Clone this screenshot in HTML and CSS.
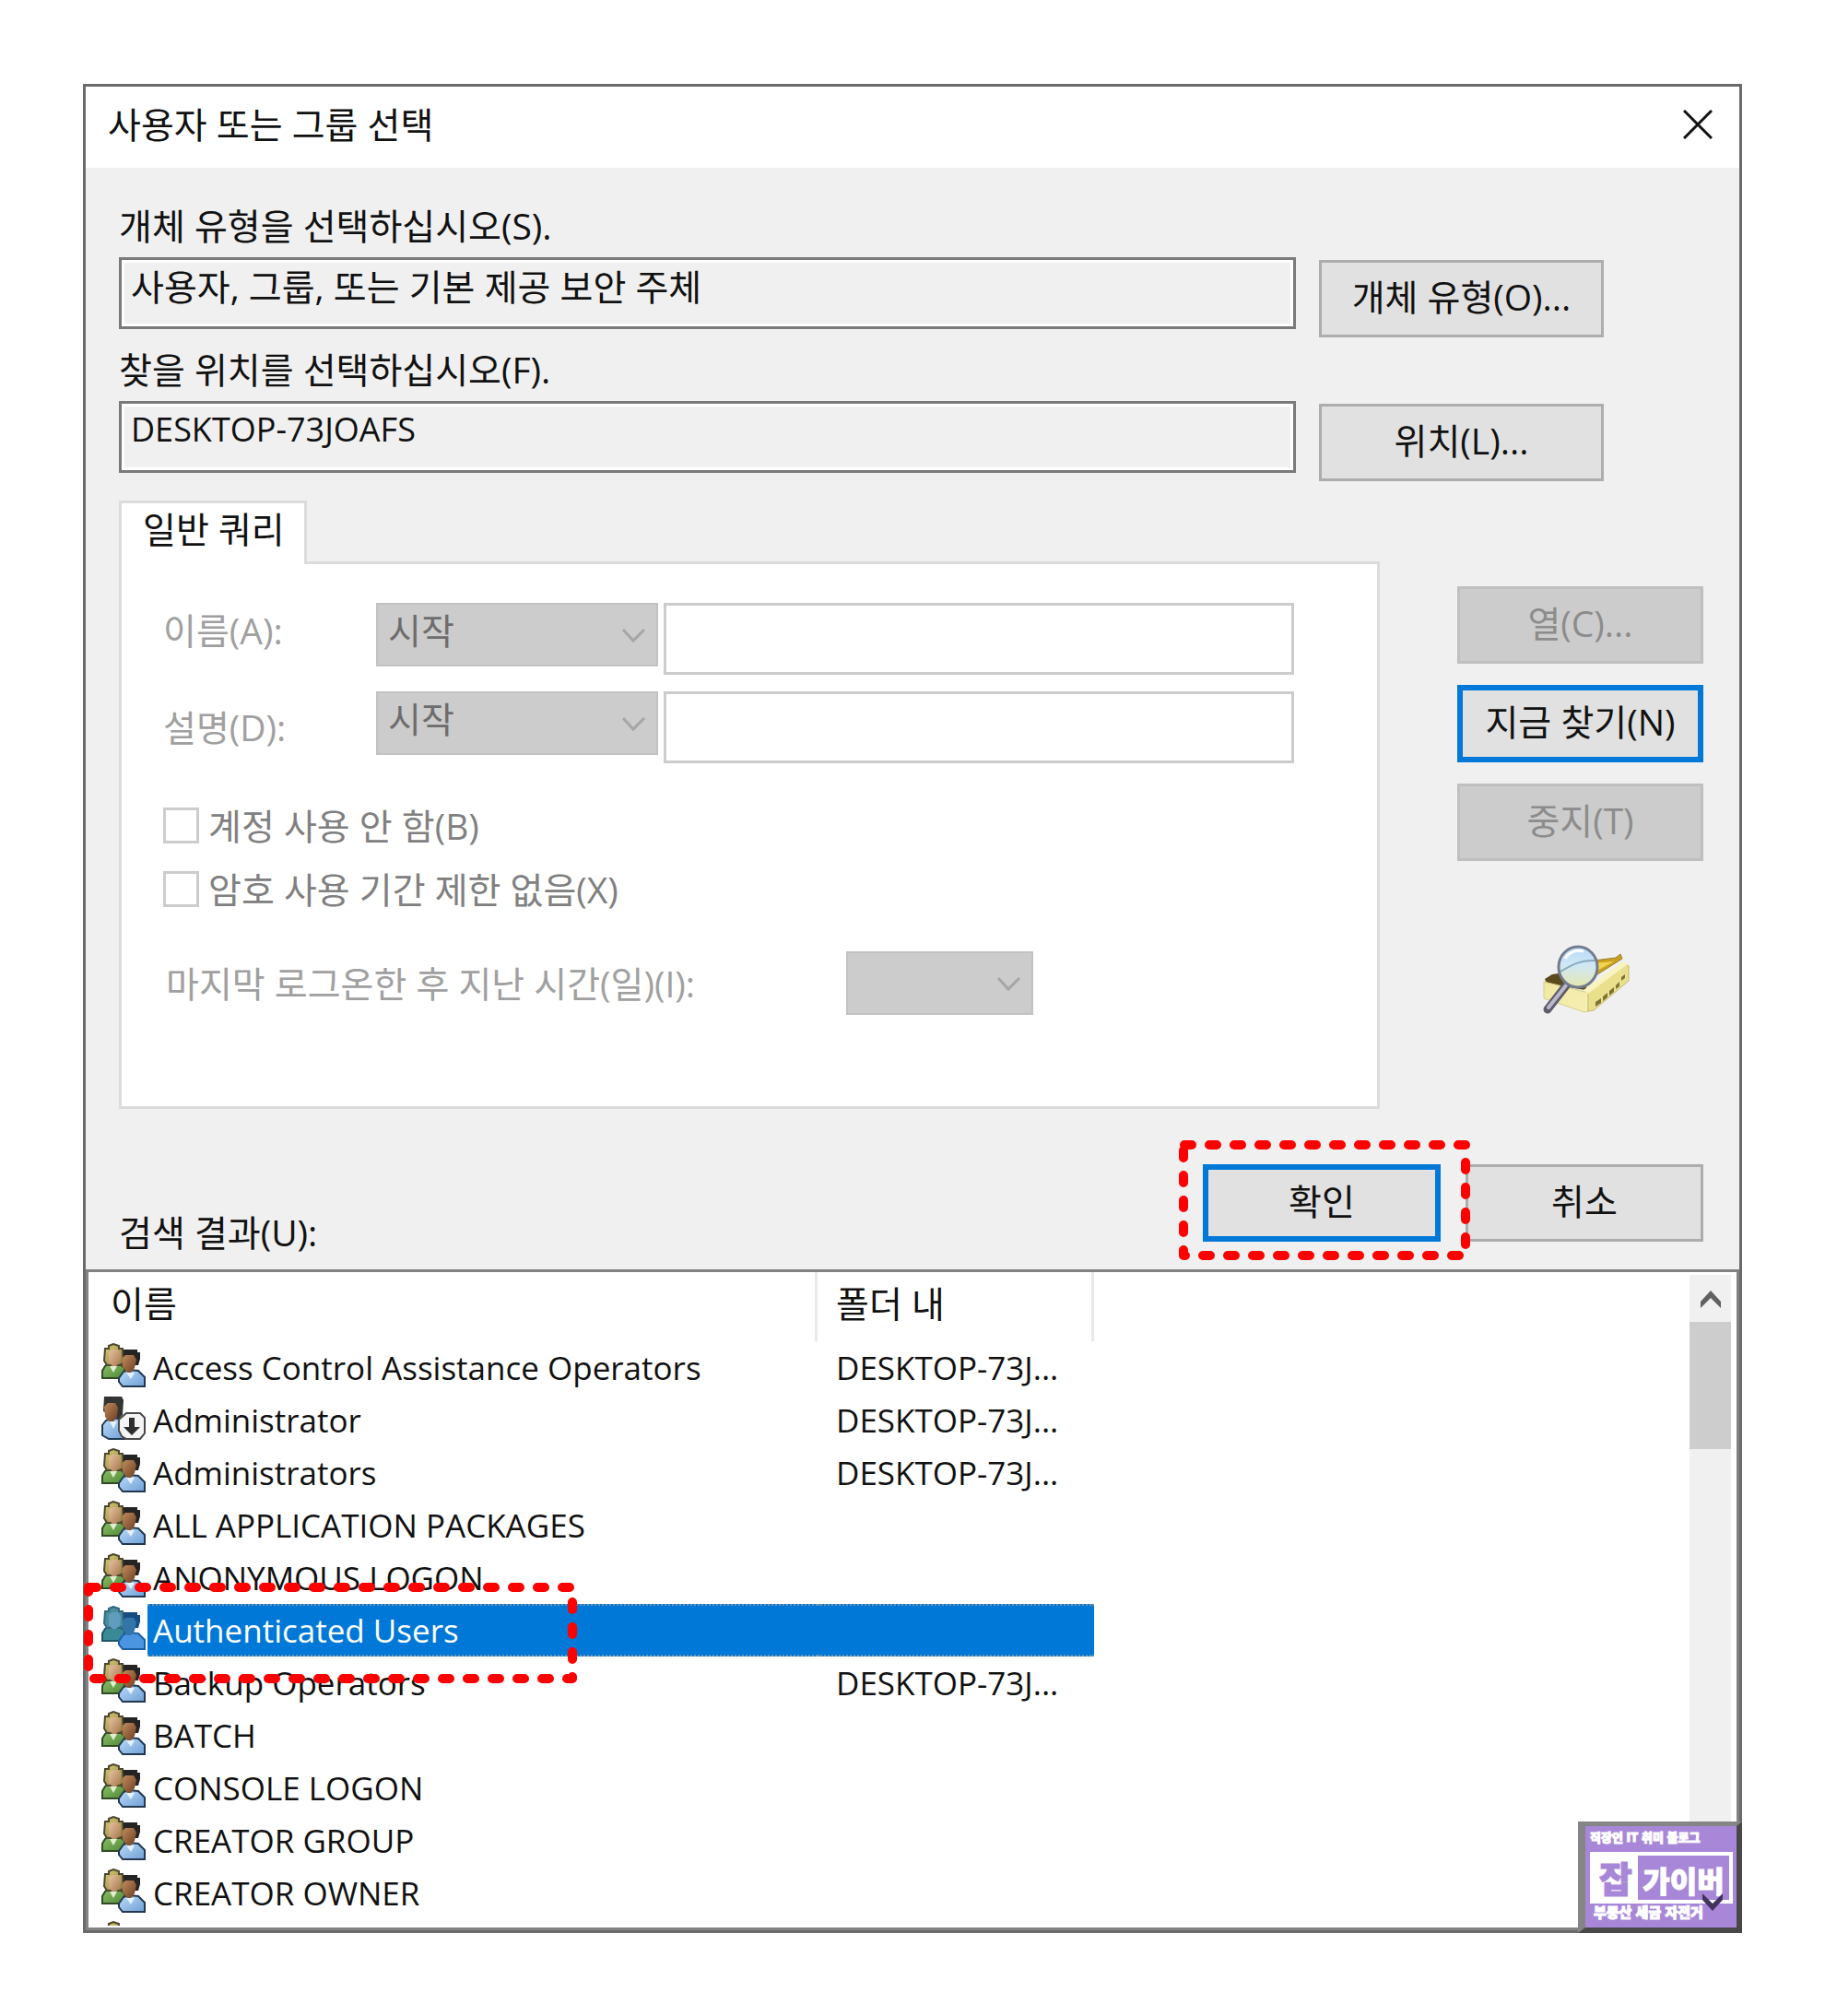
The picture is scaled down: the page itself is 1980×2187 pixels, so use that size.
FILE: index.html
```html
<!DOCTYPE html>
<html lang="ko">
<head>
<meta charset="utf-8">
<title>사용자 또는 그룹 선택</title>
<link rel="stylesheet" href="styles.css">
</head>
<body>
<svg class="defs" aria-hidden="true">
  <defs>
    <linearGradient id="hair" x1="0" y1="0" x2="1" y2="1"><stop offset="0" stop-color="#d8cf7c"/><stop offset="1" stop-color="#8d7b3a"/></linearGradient>
    <linearGradient id="skin" x1="0" y1="0" x2="1" y2="1"><stop offset="0" stop-color="#e6c3a0"/><stop offset="1" stop-color="#a87750"/></linearGradient>
    <linearGradient id="tan" x1="0" y1="0" x2="1" y2="1"><stop offset="0" stop-color="#c08a5e"/><stop offset="1" stop-color="#6b3d20"/></linearGradient>
    <linearGradient id="green" x1="0" y1="0" x2="1" y2="1"><stop offset="0" stop-color="#8fbf6a"/><stop offset="1" stop-color="#4f8a35"/></linearGradient>
    <linearGradient id="blue" x1="0" y1="0" x2="1" y2="1"><stop offset="0" stop-color="#bcdcf8"/><stop offset="1" stop-color="#6f9fd6"/></linearGradient>
    <symbol id="group" viewBox="0 0 48 48">
      <path d="M1 38V30l3-5 5-3h10l6 5v11z" fill="url(#green)" stroke="#2f4a25" stroke-width="2"/>
      <path d="M9 25l4 7 4-7z" fill="#dff0cf"/>
      <path d="M4 6h4V3l5-2 6 2v3h4l1 16-4 2H6l-3-5z" fill="url(#hair)" stroke="#4d4630" stroke-width="2"/>
      <path d="M8 10l4-3h6l3 5-1 9-4 4h-4l-4-4z" fill="url(#skin)"/>
      <path d="M24 7h15v3h3v7l-2 7H24z" fill="#252422"/>
      <path d="M19 38l5-7 6-2 10 1 4 4 3 3v10H23l-4-5z" fill="url(#blue)" stroke="#23384f" stroke-width="2"/>
      <path d="M27 32l5 7 4-7z" fill="#e4f2ff"/>
      <path d="M23 16l3-3h9l3 5-2 9-4 5h-4l-5-6z" fill="url(#tan)"/>
    </symbol>
    <symbol id="group-selected" viewBox="0 0 48 48">
      <path d="M1 38V30l3-5 5-3h10l6 5v11z" fill="#3a8a96" stroke="#1f5566" stroke-width="2"/>
      <path d="M4 6h4V3l5-2 6 2v3h4l1 16-4 2H6l-3-5z" fill="#4b8d9c" stroke="#316982" stroke-width="2"/>
      <path d="M8 10l4-3h6l3 5-1 9-4 4h-4l-4-4z" fill="#5f9cbd"/>
      <path d="M24 7h15v3h3v7l-2 7H24z" fill="#164d80"/>
      <path d="M19 38l5-7 6-2 10 1 4 4 3 3v10H23l-4-5z" fill="#4a94e0" stroke="#1a5fa5" stroke-width="2"/>
      <path d="M23 16l3-3h9l3 5-2 9-4 5h-4l-5-6z" fill="#3475a8"/>
    </symbol>
    <symbol id="user-disabled" viewBox="0 0 48 48">
      <path d="M1 43V32l4-5 6-3 8 1 6 6v16H8z" fill="url(#blue)" stroke="#23384f" stroke-width="2"/>
      <path d="M9 28l4 8 4-8z" fill="#e4f2ff"/>
      <path d="M3 1h19l2 4-1 16-4 4L2 17z" fill="#343432"/>
      <path d="M3 12l4-4h8l3 5-1 10-4 5H8l-4-5z" fill="url(#tan)"/>
      <path d="M27 19h15l5 5v17l-5 6H27l-5-3-3-6V26z" fill="#f4f4f4" stroke="#4a4a4a" stroke-width="2"/>
      <path d="M30 24h6v10h6l-9 9-9-9h6z" fill="#2f2f2f"/>
    </symbol>
  </defs>
</svg>

<main class="dialog">
  <header class="titlebar">
    <h1 class="title">사용자 또는 그룹 선택</h1>
    <button class="close" type="button" aria-label="닫기">
      <svg width="32" height="32" viewBox="0 0 32 32"><path d="M1 1l30 30M31 1L1 31" stroke="#111" stroke-width="3" fill="none"/></svg>
    </button>
  </header>

  <form class="content">
    <section class="scope">
      <label class="scope-label" for="types">개체 유형을 선택하십시오(S).</label>
      <input class="readout" id="types" type="text" value="사용자, 그룹, 또는 기본 제공 보안 주체" readonly>
      <button class="btn scope-btn" type="button">개체 유형(O)...</button>
      <label class="scope-label" for="place">찾을 위치를 선택하십시오(F).</label>
      <input class="readout latin" id="place" type="text" value="DESKTOP-73JOAFS" readonly>
      <button class="btn scope-btn" type="button">위치(L)...</button>
    </section>

    <section class="query">
      <div class="tabs">
        <div class="tab">일반 쿼리</div>
        <div class="panel">
          <div class="row">
            <label class="row-label" for="name">이름(A):</label>
            <span class="combo">
              <select aria-label="이름 조건" disabled><option>시작</option></select>
              <svg class="chevron" width="27" height="17" viewBox="0 0 27 17"><path d="M2 2l11 12L25 2" stroke="#a6a6a6" stroke-width="3" fill="none"/></svg>
            </span>
            <input class="textbox" id="name" type="text" disabled>
          </div>
          <div class="row row-center">
            <label class="row-label" for="desc">설명(D):</label>
            <span class="combo">
              <select aria-label="설명 조건" disabled><option>시작</option></select>
              <svg class="chevron" width="27" height="17" viewBox="0 0 27 17"><path d="M2 2l11 12L25 2" stroke="#a6a6a6" stroke-width="3" fill="none"/></svg>
            </span>
            <input class="textbox" id="desc" type="text" disabled>
          </div>
          <div class="checks">
            <label class="check"><input type="checkbox" disabled>계정 사용 안 함(B)</label>
            <label class="check"><input type="checkbox" disabled>암호 사용 기간 제한 없음(X)</label>
          </div>
          <div class="row row-center">
            <label class="row-label days-label" for="days">마지막 로그온한 후 지난 시간(일)(I):</label>
            <span class="combo combo-short">
              <select id="days" disabled><option></option></select>
              <svg class="chevron" width="27" height="17" viewBox="0 0 27 17"><path d="M2 2l11 12L25 2" stroke="#a6a6a6" stroke-width="3" fill="none"/></svg>
            </span>
          </div>
        </div>
      </div>
      <div class="actions">
        <button class="btn" type="button" disabled>열(C)...</button>
        <button class="btn btn-default" type="button">지금 찾기(N)</button>
        <button class="btn" type="button" disabled>중지(T)</button>
        <svg class="search-art" width="108" height="78" viewBox="0 0 108 78" aria-hidden="true">
          <defs>
            <linearGradient id="glass" x1="0" y1="0" x2="0" y2="1"><stop offset="0" stop-color="#b7d9f8"/><stop offset=".45" stop-color="#cfe8f6"/><stop offset="1" stop-color="#e6e7ae"/></linearGradient>
            <linearGradient id="card" x1="0" y1="0" x2="1" y2="1"><stop offset="0" stop-color="#efe9a2"/><stop offset="1" stop-color="#f6efb4"/></linearGradient>
          </defs>
          <path d="M15 37l8-5 20-3 22 4-6 16-42-7z" fill="#5b4a1c"/>
          <path d="M60 18l32-4 5-4 2 5-30 19-18 2z" fill="#c9a11d" stroke="#9a7d27" stroke-width="1"/>
          <path d="M66 20l24-2-24 13z" fill="#f1d54e"/>
          <path d="M14 40l49 12-1 20-4 1-44-15z" fill="url(#card)" stroke="#d6ce8c" stroke-width="1"/>
          <path d="M62 52l42-31 2 2v16L68 71l-6 1z" fill="#eae08c" stroke="#c4b970" stroke-width="1"/>
          <path d="M62 53l43-32-5-3-43 31z" fill="#f8f3bf"/>
          <g fill="#7d7138"><path d="M70 62l6-4v5l-6 4zM78 56l5-4v5l-5 4zM85 50l5-4v5l-5 4zM92 44l4-4v5l-4 3zM98 35l4-3v4l-4 3z"/></g>
          <path d="M39 43L18 70" stroke="#5c5c6c" stroke-width="9" stroke-linecap="round"/>
          <path d="M38 44L19 68" stroke="#b9b9ca" stroke-width="4" stroke-linecap="round"/>
          <ellipse cx="51" cy="24" rx="21" ry="22" fill="url(#glass)" stroke="#747b8c" stroke-width="3"/>
          <path d="M32 29c12-7 22-13 37-12" stroke="#88a9bd" stroke-width="2" fill="none"/>
          <path d="M37 15c4-7 12-10 20-8" stroke="#fff" stroke-width="3" fill="none"/>
        </svg>
      </div>
    </section>

    <section class="footer">
      <label class="results-label" for="results">검색 결과(U):</label>
      <span class="ok">
        <button class="btn btn-default btn-wide" type="submit">확인</button>
        <svg class="mark mark-ok" width="316" height="130" viewBox="0 0 316 130" aria-hidden="true"><rect x="5" y="5" width="306" height="120"/></svg>
      </span>
      <button class="btn btn-wide" type="button">취소</button>
    </section>
  </form>

  <section class="list">
    <div class="list-view">
      <table class="table" id="results">
        <colgroup><col class="col-name"><col class="col-folder"></colgroup>
        <thead><tr><th>이름</th><th class="folder">폴더 내</th></tr></thead>
        <tbody>
          <tr><td><div class="name"><svg><use href="#group"/></svg><span>Access Control Assistance Operators</span></div></td><td class="folder">DESKTOP-73J...</td></tr>
          <tr><td><div class="name"><svg><use href="#user-disabled"/></svg><span>Administrator</span></div></td><td class="folder">DESKTOP-73J...</td></tr>
          <tr><td><div class="name"><svg><use href="#group"/></svg><span>Administrators</span></div></td><td class="folder">DESKTOP-73J...</td></tr>
          <tr><td><div class="name"><svg><use href="#group"/></svg><span>ALL APPLICATION PACKAGES</span></div></td><td class="folder"></td></tr>
          <tr><td><div class="name"><svg><use href="#group"/></svg><span>ANONYMOUS LOGON</span></div></td><td class="folder"></td></tr>
          <tr class="selected"><td><div class="name"><svg><use href="#group-selected"/></svg><span>Authenticated Users</span></div></td><td class="folder"></td></tr>
          <tr><td><div class="name"><svg><use href="#group"/></svg><span>Backup Operators</span></div></td><td class="folder">DESKTOP-73J...</td></tr>
          <tr><td><div class="name"><svg><use href="#group"/></svg><span>BATCH</span></div></td><td class="folder"></td></tr>
          <tr><td><div class="name"><svg><use href="#group"/></svg><span>CONSOLE LOGON</span></div></td><td class="folder"></td></tr>
          <tr><td><div class="name"><svg><use href="#group"/></svg><span>CREATOR GROUP</span></div></td><td class="folder"></td></tr>
          <tr><td><div class="name"><svg><use href="#group"/></svg><span>CREATOR OWNER</span></div></td><td class="folder"></td></tr>
          <tr><td><div class="name"><svg><use href="#group"/></svg></div></td><td class="folder"></td></tr>
        </tbody>
      </table>
      <svg class="mark mark-row" width="535" height="109" viewBox="0 0 535 109" aria-hidden="true"><rect x="5" y="5" width="525" height="99"/></svg>
    </div>
    <div class="scrollbar">
      <svg class="arrow" width="22" height="19" viewBox="0 0 22 19"><path d="M0 12L11 0l11 12v7L11 8 0 19z" fill="#606060"/></svg>
      <div class="thumb"></div>
      <svg class="arrow arrow-down" width="22" height="19" viewBox="0 0 22 19"><path d="M0 7l11 12L22 7V0L11 11 0 0z" fill="#606060"/></svg>
    </div>
  </section>

  <aside class="badge">
    <div class="badge-small">직장인 IT 취미 블로그</div>
    <div class="badge-name"><span class="badge-first">잡</span><span class="badge-rest">가이버</span></div>
    <div class="badge-tags">부동산 세금 자전거</div>
    <svg class="badge-arrow" width="24" height="19" viewBox="0 0 22 19"><path d="M0 7l11 12L22 7V0L11 11 0 0z" fill="#43335f"/></svg>
  </aside>
</main>
</body>
</html>
```
FILE: styles.css
```css
* { box-sizing: border-box; }

body {
  margin: 0;
  padding: 91px 90px 90px;
  background: #fff;
  color: #111;
  font-family: "Open Sans", "Noto Sans CJK KR", sans-serif;
  font-size: 39px;
  line-height: 50px;
}

input, select, button { font: inherit; color: inherit; margin: 0; }
label, th, td, .tab, .btn { white-space: nowrap; }

.defs { position: absolute; width: 0; height: 0; }

.dialog {
  position: relative;
  border: 3px solid #6b6b6b;
  background: #f0f0f0;
}

.titlebar {
  display: flex;
  align-items: center;
  justify-content: space-between;
  height: 88px;
  padding: 0 23px 6px 24px;
  background: #fff;
}
.title { margin: 0; font-size: 39px; font-weight: 400; line-height: 50px; }
.close { display: flex; padding: 6px; border: 0; background: none; }

.content { padding: 38px 39px 15px 36px; }

/* Object type and location */
.scope {
  display: grid;
  grid-template-columns: 1fr 309px;
  column-gap: 25px;
  padding-right: 108px;
}
.scope-label { grid-column: 1 / -1; margin-bottom: 9px; }
.readout {
  width: 100%;
  height: 78px;
  padding: 0 10px 18px;
  border: 3px solid #7a7a7a;
  box-shadow: inset 0 0 0 3px #fff;
  background: #f0f0f0;
  outline: 0;
}
.latin { font-size: 36px; }
.scope-btn { margin: 3px 0 10px; }

.btn {
  height: 84px;
  padding: 0 0 5px;
  border: 3px solid #adadad;
  background: #e1e1e1;
}
.btn:disabled { border-color: #bfbfbf; background: #ccc; color: #8c8c8c; }
.btn-default { border: 6px solid #0078d7; }
.btn-wide { width: 258px; }

/* Query tab */
.query { display: flex; gap: 84px; margin-top: 11px; }
.tabs { flex: 1; }
.tab {
  position: relative;
  z-index: 1;
  width: 204px;
  height: 69px;
  margin-bottom: -3px;
  padding-left: 23px;
  border: 3px solid #dcdcdc;
  border-bottom: 0;
  background: #fff;
  line-height: 56px;
}
.panel {
  padding: 42px 90px 99px 45px;
  border: 3px solid #dcdcdc;
  background: #fff;
}
.row { display: flex; align-items: flex-start; margin-bottom: 18px; }
.row:last-child { margin-bottom: 0; }
.row-center { align-items: center; }
.row-label { width: 231px; line-height: 60px; color: #a0a0a0; }
.days-label { width: 741px; padding-left: 3px; }
.combo { position: relative; align-self: flex-start; width: 306px; height: 69px; margin-right: 6px; }
.combo select {
  width: 100%;
  height: 100%;
  padding: 0 11px 9px;
  border: 2px solid #c2c2c2;
  border-radius: 0;
  background: #ccc;
  color: #6d6d6d;
  opacity: 1;
  appearance: none;
}
.combo-short { width: 203px; }
.chevron { position: absolute; right: 13px; top: 27px; }
.textbox {
  flex: 1;
  min-width: 0;
  height: 78px;
  border: 3px solid #ccc;
  background: #fff;
}
.checks { display: grid; gap: 30px; padding: 30px 0 48px; }
.check { display: flex; align-items: center; gap: 10px; height: 39px; color: #808080; }
.check input {
  width: 39px;
  height: 39px;
  border: 3px solid #ccc;
  background: #fff;
  appearance: none;
}

.actions {
  display: flex;
  flex-direction: column;
  gap: 23px;
  width: 267px;
  padding-top: 93px;
}
.search-art { align-self: center; margin-top: 68px; }

/* Confirm buttons */
.footer { display: flex; align-items: flex-end; gap: 27px; margin-top: 60px; }
.results-label { flex: 1; }
.footer .btn { display: block; margin-bottom: 15px; }
.ok { position: relative; }

.mark { position: absolute; pointer-events: none; }
.mark rect {
  fill: none;
  stroke: #fe0000;
  stroke-width: 10;
  stroke-linecap: round;
  stroke-linejoin: round;
  stroke-dasharray: 8 19;
  stroke-dashoffset: -1px;
}
.mark-ok { left: -26px; top: -26px; }
.mark-row { left: -5px; top: 337px; }

/* Result list */
.list {
  display: flex;
  height: 717px;
  padding-right: 6px;
  border: 3px solid #828282;
  background: #fff;
}
.list-view {
  position: relative;
  flex: 1;
  height: 709px;
  clip-path: inset(0 0 0 -6px);
}
.table { width: 1091px; border-collapse: separate; border-spacing: 0; table-layout: fixed; }
.col-name { width: 791px; }
.col-folder { width: 300px; }
.table th {
  height: 75px;
  padding: 0 0 8px 24px;
  border-right: 3px solid #e8e8e8;
  font-weight: 400;
  text-align: left;
}
.table td { height: 57px; padding: 0; font-size: 35px; line-height: 53px; }
.table .folder { padding-left: 20px; }
.name { display: flex; align-items: center; gap: 2px; height: 57px; padding-left: 14px; }
.name svg { width: 48px; height: 48px; margin-bottom: 5px; }
.name span { flex: 1; padding-left: 6px; }
.selected .name span,
.selected .folder {
  border-top: 2px dotted #6f93ad;
  border-bottom: 2px dotted #6f93ad;
  background: #0078d7;
  color: #fff;
}

.scrollbar {
  display: flex;
  flex-direction: column;
  align-items: center;
  width: 45px;
  margin: 3px 0;
  background: #f0f0f0;
}
.arrow { margin: 17px 0 15px; }
.thumb { width: 45px; height: 138px; background: #cdcdcd; }
.arrow-down { margin-top: auto; }

/* Blog badge over the corner of the window */
.badge {
  position: absolute;
  right: -3px;
  bottom: -3px;
  width: 178px;
  height: 121px;
  padding: 4px 4px 0 5px;
  border: 6px solid #484848;
  border-left: 8px solid #858585;
  border-top: 5px solid #858585;
  background: #a887d8;
  color: #fff;
  font-family: "Noto Sans CJK KR", sans-serif;
  font-weight: 900;
  -webkit-text-stroke: 1px;
}
.badge-small { font-size: 13px; line-height: 16px; white-space: nowrap; }
.badge-name { display: flex; height: 56px; margin-top: 8px; border: 4px solid #fff; line-height: 46px; }
.badge-first { width: 48px; background: #fff; color: #a887d8; font-size: 39px; text-align: center; }
.badge-rest { flex: 1; font-size: 32px; line-height: 52px; text-align: center; }
.badge-tags { padding-left: 4px; font-size: 15px; line-height: 18px; white-space: nowrap; }
.badge-arrow { position: absolute; right: 14px; bottom: 18px; }
```
